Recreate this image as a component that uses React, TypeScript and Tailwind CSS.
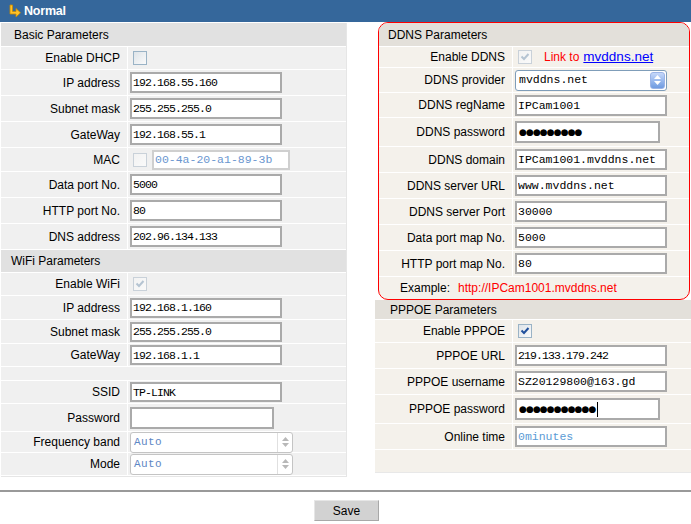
import React from "react";

type RowProps = {
  h: string;
  label: string;
  lw?: string;
  children?: React.ReactNode;
};

// left panel row (grey)
function LRow({ h, label, children }: RowProps) {
  return (
    <div className={`flex ${h} border-b border-white`}>
      <div className="w-[127px] shrink-0 flex items-center justify-end pr-[7px] border-r border-white">
        {label}
      </div>
      <div className="flex-1 flex items-center pl-[2px]">{children}</div>
    </div>
  );
}

// right panel row (beige)
function RRow({ h, label, lw = "w-[134px]", children }: RowProps) {
  return (
    <div className={`flex ${h} border-b border-white`}>
      <div className={`${lw} shrink-0 flex items-center justify-end pr-[7px] border-r border-white`}>
        {label}
      </div>
      <div className="flex-1 flex items-center pl-[2px]">{children}</div>
    </div>
  );
}

function Field({
  value,
  w = "w-[152px]",
  h = "h-[21px]",
  font = "small",
  className = "",
}: {
  value: string;
  w?: string;
  h?: string;
  font?: "small" | "big";
  className?: string;
}) {
  const f =
    font === "small"
      ? "text-[11.5px] tracking-[-0.9px]"
      : "text-[11.5px] tracking-[0px]";
  return (
    <input
      readOnly
      value={value}
      className={`${w} ${h} border-2 border-[#aaaaaa] bg-white pl-[1px] font-['Liberation_Mono',monospace] ${f} text-black outline-none ${className}`}
    />
  );
}

function Dots({ n, w, cursor }: { n: number; w: string; cursor?: boolean }) {
  return (
    <div className={`${w} h-[22px] border-2 border-[#aaaaaa] bg-white flex items-center pl-[2px]`}>
      <span className="font-['DejaVu_Sans',sans-serif] text-[9px] tracking-[-0.9px] leading-none text-black">
        {"●".repeat(n)}
      </span>
      {cursor && <span className="w-px h-[15px] bg-black ml-[2px]" />}
    </div>
  );
}

function Check({ checked, disabled }: { checked?: boolean; disabled?: boolean }) {
  const border = disabled ? "#c9d1d9" : "#9ab3c6";
  const tick = disabled ? "#b5c4d2" : "#21509c";
  return (
    <svg width="14" height="14" viewBox="0 0 14 14" className="ml-[3px]">
      <defs>
        <linearGradient id={`cb${disabled ? "d" : "e"}`} x1="0" y1="0" x2="1" y2="1">
          <stop offset="0" stopColor={disabled ? "#f2f2f2" : "#dde3e8"} />
          <stop offset="1" stopColor={disabled ? "#fafafa" : "#fbfbfb"} />
        </linearGradient>
      </defs>
      <rect x="0.5" y="0.5" width="13" height="13" fill={`url(#cb${disabled ? "d" : "e"})`} stroke={border} />
      {checked && (
        <path d="M3.5 6.5 L6 9 L10.5 4" fill="none" stroke={tick} strokeWidth="2" />
      )}
    </svg>
  );
}

function GraySelect() {
  return (
    <div className="w-[163px] h-[21px] rounded-[3px] border border-[#c4c4c4] bg-white flex items-center">
      <span className="flex-1 pl-[3px] font-['Liberation_Mono',monospace] text-[11px] tracking-[0.4px] text-[#5d86c4]">
        Auto
      </span>
      <div className="w-[15px] h-full border-l border-[#e0e0e0] flex flex-col items-center justify-center gap-[2px]">
        <svg width="7" height="4" viewBox="0 0 7 4">
          <path d="M0 4 L3.5 0 L7 4 Z" fill="#b8b8b8" />
        </svg>
        <svg width="7" height="4" viewBox="0 0 7 4">
          <path d="M0 0 L3.5 4 L7 0 Z" fill="#b8b8b8" />
        </svg>
      </div>
    </div>
  );
}

function BlueSelect() {
  return (
    <div className="w-[152px] h-[21px] rounded-[3px] border border-[#7f9db9] bg-white flex items-center pr-[1px]">
      <span className="flex-1 pl-[3px] font-['Liberation_Mono',monospace] text-[11.5px] text-black">
        mvddns.net
      </span>
      <div className="w-[15px] h-[17px] rounded-[3px] border border-[#9bb4e6] bg-gradient-to-b from-[#c6d8fa] to-[#6f9be0] flex flex-col items-center justify-center gap-[2px]">
        <svg width="7" height="4" viewBox="0 0 7 4">
          <path d="M0 4 L3.5 0 L7 4 Z" fill="#ffffff" />
        </svg>
        <svg width="7" height="4" viewBox="0 0 7 4">
          <path d="M0 0 L3.5 4 L7 0 Z" fill="#ffffff" />
        </svg>
      </div>
    </div>
  );
}

export default function App() {
  return (
    <div className="w-[691px] h-[524px] bg-white overflow-hidden font-['Liberation_Sans',Arial,sans-serif] text-[12px] text-black">
      {/* title bar */}
      <div className="h-[22px] bg-[#35679b] flex items-center pl-[8px] gap-[2px]">
        <svg width="14" height="14" viewBox="0 0 14 14">
          <path d="M2 1 H4.5 V7.5 H8 V4.5 L12.5 8.75 L8 13 V10 H2 Z" fill="#ffc22a" stroke="#c98a00" strokeWidth="0.8" />
        </svg>
        <span className="text-white font-bold text-[12.5px] tracking-[-0.2px]">Normal</span>
      </div>

      <div className="flex">
        {/* left panel */}
        <div className="mt-[1px] ml-[1px] w-[346px] border-r border-b border-[#e6e6e6] bg-[#f0f0f0]">
          <div className="h-[24px] bg-[#e1e1e1] border-b border-white flex items-center pl-[13px]">
            Basic Parameters
          </div>
          <LRow h="h-[23px]" label="Enable DHCP">
            <Check />
          </LRow>
          <LRow h="h-[26px]" label="IP address">
            <Field value="192.168.55.160" />
          </LRow>
          <LRow h="h-[26px]" label="Subnet mask">
            <Field value="255.255.255.0" />
          </LRow>
          <LRow h="h-[26px]" label="GateWay">
            <Field value="192.168.55.1" />
          </LRow>
          <LRow h="h-[24px]" label="MAC">
            <Check disabled />
            <input
              readOnly
              value="00-4a-20-a1-89-3b"
              className="ml-[5px] w-[138px] h-[20px] border-2 border-[#cfcfcf] bg-white pl-[1px] font-['Liberation_Mono',monospace] text-[11.5px] text-[#6a96cf] outline-none"
            />
          </LRow>
          <LRow h="h-[26px]" label="Data port No.">
            <Field value="5000" />
          </LRow>
          <LRow h="h-[26px]" label="HTTP port No.">
            <Field value="80" />
          </LRow>
          <LRow h="h-[26px]" label="DNS address">
            <Field value="202.96.134.133" />
          </LRow>

          <div className="h-[23px] bg-[#e1e1e1] border-b border-white flex items-center pl-[10px]">
            WiFi Parameters
          </div>
          <LRow h="h-[23px]" label="Enable WiFi">
            <Check checked disabled />
          </LRow>
          <LRow h="h-[24px]" label="IP address">
            <Field value="192.168.1.160" h="h-[20px]" />
          </LRow>
          <LRow h="h-[24px]" label="Subnet mask">
            <Field value="255.255.255.0" h="h-[20px]" />
          </LRow>
          <LRow h="h-[23px]" label="GateWay">
            <Field value="192.168.1.1" h="h-[20px]" />
          </LRow>
          <div className="h-[14px] border-b border-white" />
          <LRow h="h-[23px]" label="SSID">
            <Field value="TP-LINK" h="h-[20px]" />
          </LRow>
          <LRow h="h-[28px]" label="Password">
            <Field value="" w="w-[144px]" h="h-[22px]" />
          </LRow>
          <LRow h="h-[21px]" label="Frequency band">
            <GraySelect />
          </LRow>
          <LRow h="h-[23px]" label="Mode">
            <GraySelect />
          </LRow>
        </div>

        {/* right panel */}
        <div className="ml-[28px] w-[316px]">
          <div className="ml-[3px] mr-[1px] rounded-[10px] border border-[#ff0000] bg-[#f4f1eb] overflow-hidden">
            <div className="h-[24px] bg-[#e3e0da] border-b border-white flex items-center pl-[9px]">
              DDNS Parameters
            </div>
            <RRow h="h-[21px]" label="Enable DDNS">
              <Check checked disabled />
              <span className="ml-[12px] text-[#ff0000]">Link to</span>
              <span className="ml-[4px] text-[#0000ff] underline text-[13.5px]">mvddns.net</span>
            </RRow>
            <RRow h="h-[25px]" label="DDNS provider">
              <BlueSelect />
            </RRow>
            <RRow h="h-[25px]" label="DDNS regName">
              <Field value="IPCam1001" font="big" />
            </RRow>
            <RRow h="h-[29px]" label="DDNS password">
              <Dots n={9} w="w-[145px]" />
            </RRow>
            <RRow h="h-[26px]" label="DDNS domain">
              <Field value="IPCam1001.mvddns.net" font="big" />
            </RRow>
            <RRow h="h-[26px]" label="DDNS server URL">
              <Field value="www.mvddns.net" font="big" />
            </RRow>
            <RRow h="h-[26px]" label="DDNS server Port">
              <Field value="30000" font="big" />
            </RRow>
            <RRow h="h-[26px]" label="Data port map No.">
              <Field value="5000" font="big" />
            </RRow>
            <RRow h="h-[26px]" label="HTTP port map No.">
              <Field value="80" font="big" />
            </RRow>
            <div className="h-[22px] flex items-center pl-[21px]">
              <span>Example:</span>
              <span className="ml-[8px] text-[#ff0000]">http://IPCam1001.mvddns.net</span>
            </div>
          </div>

          <div className="bg-[#f4f1eb] border-b border-[#e8e8e8]">
            <div className="h-[20px] bg-[#e3e0da] border-b border-white flex items-center pl-[15px]">
              PPPOE Parameters
            </div>
            <RRow h="h-[23px]" label="Enable PPPOE" lw="w-[138px]">
              <Check checked />
            </RRow>
            <RRow h="h-[26px]" label="PPPOE URL" lw="w-[138px]">
              <Field value="219.133.179.242" />
            </RRow>
            <RRow h="h-[26px]" label="PPPOE username" lw="w-[138px]">
              <Field value="SZ20129800@163.gd" font="big" />
            </RRow>
            <RRow h="h-[29px]" label="PPPOE password" lw="w-[138px]">
              <Dots n={11} w="w-[145px]" cursor />
            </RRow>
            <RRow h="h-[26px]" label="Online time" lw="w-[138px]">
              <input
                readOnly
                value="0minutes"
                className="w-[152px] h-[21px] border-2 border-[#aaaaaa] bg-white pl-[1px] font-['Liberation_Mono',monospace] text-[11.5px] text-[#5b9bd5] outline-none"
              />
            </RRow>
            <div className="h-[22px]" />
          </div>
        </div>
      </div>

      {/* footer */}
      <div className="mt-[13px] h-[2px] bg-[#999999]" />
      <div className="mt-[8px] pl-[314px]">
        <button className="w-[65px] h-[21px] bg-[#d2d2d2] border-t border-l border-[#e6e6e6] border-b border-r border-b-[#a8a8a8] border-r-[#a8a8a8] text-[12px] text-black">
          Save
        </button>
      </div>
    </div>
  );
}
